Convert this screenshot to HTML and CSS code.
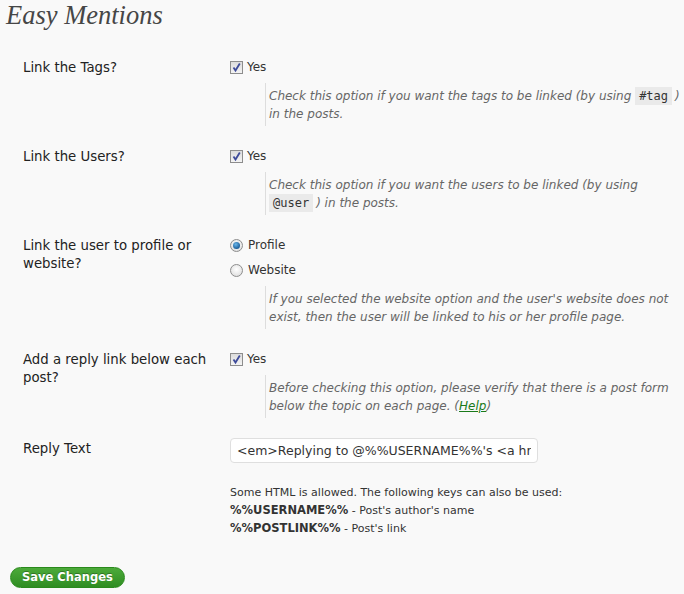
FILE: index.html
```html
<!DOCTYPE html>
<html>
<head>
<meta charset="utf-8">
<link rel="stylesheet" href="styles.css">
</head>
<body>
<div class="wrap">
  <h2 class="title">Easy Mentions</h2>
  <form class="form">
    <div class="row">
      <div class="label">Link the Tags?</div>
      <div class="field">
        <label class="opt"><span class="cb"><svg width="13" height="13" viewBox="0 0 13 13"><path d="M3.5 6.5 L5.5 9.5 L9.8 2.5" fill="none" stroke="#3e4b9a" stroke-width="1.8"/></svg></span>Yes</label>
        <p class="desc">Check this option if you want the tags to be linked (by using <code>#tag</code>) in the posts.</p>
      </div>
    </div>
    <div class="row">
      <div class="label">Link the Users?</div>
      <div class="field">
        <label class="opt"><span class="cb"><svg width="13" height="13" viewBox="0 0 13 13"><path d="M3.5 6.5 L5.5 9.5 L9.8 2.5" fill="none" stroke="#3e4b9a" stroke-width="1.8"/></svg></span>Yes</label>
        <p class="desc">Check this option if you want the users to be linked (by using <code>@user</code>) in the posts.</p>
      </div>
    </div>
    <div class="row">
      <div class="label">Link the user to profile or website?</div>
      <div class="field">
        <label class="opt"><span class="radio on"><span class="dot"></span></span>Profile</label>
        <label class="opt"><span class="radio"></span>Website</label>
        <p class="desc">If you selected the website option and the user's website does not exist, then the user will be linked to his or her profile page.</p>
      </div>
    </div>
    <div class="row">
      <div class="label">Add a reply link below each post?</div>
      <div class="field">
        <label class="opt"><span class="cb"><svg width="13" height="13" viewBox="0 0 13 13"><path d="M3.5 6.5 L5.5 9.5 L9.8 2.5" fill="none" stroke="#3e4b9a" stroke-width="1.8"/></svg></span>Yes</label>
        <p class="desc">Before checking this option, please verify that there is a post form below the topic on each page. (<a href="#" class="help">Help</a>)</p>
      </div>
    </div>
    <div class="row last">
      <div class="label">Reply Text</div>
      <div class="field">
        <input class="text" type="text" value="<em>Replying to @%%USERNAME%%'s <a href=&quot;%%POSTLINK%%&quot;>post</a></em>">
        <div class="note">
          <div>Some HTML is allowed. The following keys can also be used:</div>
          <div><b>%%USERNAME%%</b> - Post's author's name</div>
          <div><b>%%POSTLINK%%</b> - Post's link</div>
        </div>
      </div>
    </div>
    <div class="submit"><button type="button" class="btn">Save Changes</button></div>
  </form>
</div>
</body>
</html>
```
FILE: styles.css
```css
html, body { margin: 0; padding: 0; background: #f9f9f9; }
body { font-family: "DejaVu Sans", Verdana, sans-serif; color: #333; }
.wrap { padding: 0 0 0 6px; }
.title {
  margin: 0; padding: 0;
  font-family: "Liberation Serif", Georgia, serif;
  font-style: italic; font-weight: normal;
  font-size: 26.5px; line-height: 30px; color: #464646;
}
.form { margin: 17px 0 0 0; }
.row { display: grid; grid-template-columns: 224px 1fr; padding: 10px 0; }
.label { padding-left: 17px; font-size: 13.3px; line-height: 18px; padding-top: 2px; color: #222; padding-right: 10px; }
.field { padding-right: 4px; }
.opt { display: flex; align-items: center; height: 20px; font-size: 12px; color: #333; }
.opt + .opt { margin-top: 5px; }
.cb {
  width: 11px; height: 11px; border: 1px solid #8d8d8d; background: linear-gradient(#dcdcdc, #f4f4f4);
  margin-right: 4px; position: relative; display: inline-block;
}
.cb svg { position: absolute; left: -1px; top: -1px; }
.radio {
  width: 11px; height: 11px; border: 1px solid #8d8d8d; border-radius: 50%;
  background: radial-gradient(circle at 50% 40%, #fff, #d8d8d8);
  margin-right: 5px; display: inline-flex; align-items: center; justify-content: center;
}
.radio .dot { width: 7px; height: 7px; border-radius: 50%; background: radial-gradient(circle at 40% 35%, #6ab7ea, #1d5f9a 70%); }
.desc {
  margin: 6px 0 0 35px; padding: 4px 0 3px 3px; border-left: 1px solid #ddd;
  font-size: 12px; line-height: 18px; font-style: italic; color: #666;
}
.desc code {
  font-family: "DejaVu Sans Mono", monospace; font-style: normal; font-size: 12px; line-height: 14px;
  background: #eaeaea; padding: 2px 4px; margin-right: 3px; color: #333;
}
.help { color: #1a7a1a; font-style: italic; }
.text {
  display: block; box-sizing: border-box; width: 308px; height: 25px; margin: 0;
  border: 1px solid #dfdfdf; border-radius: 4px; background: #fff;
  font-family: "DejaVu Sans", Verdana, sans-serif; font-size: 12.5px; padding: 0 6px; color: #333;
}
.note { margin-top: 21px; font-size: 11px; line-height: 18px; color: #333; }
.note div { height: 18px; }
.note b { font-size: 11.5px; line-height: 14px; }
.submit { padding: 18px 0 0 4px; }
.btn {
  height: 21px; padding: 0 11px; border: 1px solid #2a8a1c; border-radius: 11px;
  background: linear-gradient(#4caa3a, #2f8d22); color: #fff; font-weight: bold;
  font-family: "DejaVu Sans", Verdana, sans-serif; font-size: 11.5px; line-height: 19px;
  text-shadow: 0 -1px 0 rgba(0,0,0,0.3);
}
```
